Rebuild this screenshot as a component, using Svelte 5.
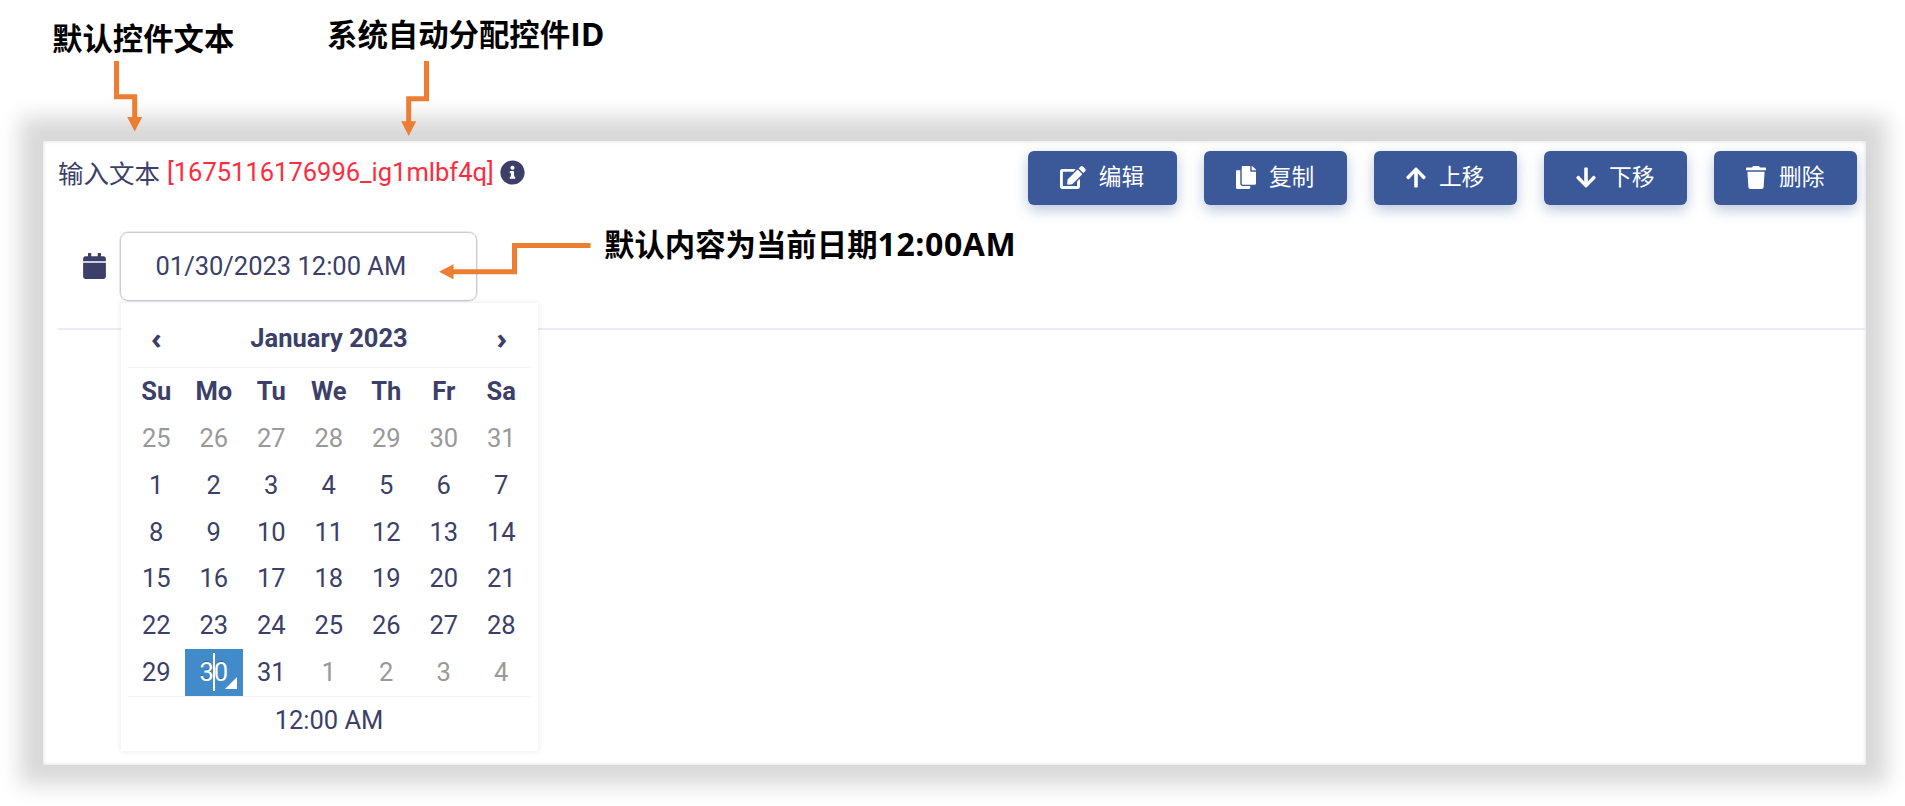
<script>
  const actions = [
    { label: '编辑', icon: 'edit' },
    { label: '复制', icon: 'copy' },
    { label: '上移', icon: 'up' },
    { label: '下移', icon: 'down' },
    { label: '删除', icon: 'trash' }
  ];
  const weekdays = ['Su', 'Mo', 'Tu', 'We', 'Th', 'Fr', 'Sa'];
  const days = Array.from({ length: 42 }, (_, i) => {
    const n = i - 6;
    if (n < 1) return { n: n + 31, muted: true };
    if (n > 31) return { n: n - 31, muted: true };
    return { n, active: n === 30 };
  });
</script>

<main class="page">
  <section class="panel">
    <header class="bar">
      <div class="title">
        <span class="name">输入文本</span>
        <span class="id">[1675116176996_ig1mlbf4q]</span>
        <svg class="info" viewBox="0 0 512 512"><path fill="currentColor" d="M256 8C119 8 8 119 8 256s111 248 248 248 248-111 248-248S393 8 256 8zm0 110c23 0 42 19 42 42s-19 42-42 42-42-19-42-42 19-42 42-42zm56 254c0 7-5 12-12 12h-88c-7 0-12-5-12-12v-24c0-7 5-12 12-12h12v-64h-12c-7 0-12-5-12-12v-24c0-7 5-12 12-12h64c7 0 12 5 12 12v100h12c7 0 12 5 12 12z"/></svg>
      </div>
      <div class="actions">
        {#each actions as a}
          <button class="btn">
            {#if a.icon === 'edit'}
              <svg class="wide" viewBox="0 0 576 512"><path fill="currentColor" d="M402.600 83.200l90.200 90.200c3.800 3.800 3.800 10 0 13.800L274.400 405.600l-92.800 10.300c-12.400 1.400-22.900-9.100-21.500-21.500l10.300-92.800L388.800 83.200c3.800-3.800 10-3.800 13.800 0zm162-22.900l-48.800-48.800c-15.200-15.200-39.900-15.200-55.200 0l-35.400 35.400c-3.800 3.800-3.800 10 0 13.800l90.200 90.200c3.800 3.800 10 3.800 13.800 0l35.400-35.400c15.200-15.300 15.200-40 0-55.200zM384 346.200V448H64V128h229.800c3.200 0 6.200-1.300 8.500-3.500l40-40c7.600-7.600 2.200-20.500-8.500-20.500H48C21.500 64 0 85.500 0 112v352c0 26.500 21.500 48 48 48h352c26.500 0 48-21.500 48-48V306.200c0-10.700-12.900-16-20.500-8.500l-40 40c-2.200 2.300-3.500 5.300-3.500 8.500z"/></svg>
            {:else if a.icon === 'copy'}
              <svg viewBox="0 0 448 512"><path fill="currentColor" d="M320 448v40c0 13.300-10.700 24-24 24H24c-13.300 0-24-10.700-24-24V120c0-13.300 10.700-24 24-24h72v296c0 30.900 25.100 56 56 56h168zm0-344V0H152c-13.300 0-24 10.700-24 24v368c0 13.300 10.700 24 24 24h272c13.300 0 24-10.700 24-24V128H344c-13.200 0-24-10.800-24-24zm121-31L375 7A24 24 0 0 0 358.100 0H352v96h96v-6.100a24 24 0 0 0-7-16.900z"/></svg>
            {:else if a.icon === 'up'}
              <svg viewBox="0 0 448 512"><path fill="currentColor" d="M34.900 289.500l-22.200-22.200c-9.400-9.400-9.400-24.600 0-33.900L207 39c9.400-9.400 24.600-9.400 33.900 0l194.300 194.300c9.400 9.400 9.400 24.600 0 33.900L413 289.400c-9.500 9.500-25 9.300-34.300-.4L264 168.600V456c0 13.300-10.700 24-24 24h-32c-13.300 0-24-10.700-24-24V168.600L69.200 289.100c-9.300 9.800-24.800 10-34.300.4z"/></svg>
            {:else if a.icon === 'down'}
              <svg viewBox="0 0 448 512"><path fill="currentColor" d="M413.100 222.500l22.200 22.200c9.400 9.400 9.400 24.600 0 33.900L241 473c-9.400 9.400-24.600 9.400-33.900 0L12.700 278.600c-9.400-9.400-9.400-24.600 0-33.900l22.200-22.200c9.500-9.500 25-9.300 34.300.4L184 343.400V56c0-13.300 10.700-24 24-24h32c13.300 0 24 10.700 24 24v287.400l114.800-120.500c9.300-9.800 24.800-10 34.300-.4z"/></svg>
            {:else}
              <svg viewBox="0 0 448 512"><path fill="currentColor" d="M432 32H312l-9.400-18.700A24 24 0 0 0 281.100 0H166.800a23.700 23.700 0 0 0-21.400 13.300L136 32H16A16 16 0 0 0 0 48v32a16 16 0 0 0 16 16h416a16 16 0 0 0 16-16V48a16 16 0 0 0-16-16zM32 128l21.200 339a48 48 0 0 0 47.900 45h245.800a48 48 0 0 0 47.900-45L416 128z"/></svg>
            {/if}
            <span>{a.label}</span>
          </button>
        {/each}
      </div>
    </header>

    <div class="field">
      <svg class="cal" viewBox="0 0 448 512"><path fill="currentColor" d="M0 464c0 26.500 21.500 48 48 48h352c26.500 0 48-21.500 48-48V192H0v272zM448 112c0-26.500-21.500-48-48-48h-48V12c0-6.600-5.400-12-12-12h-40c-6.600 0-12 5.400-12 12v52H160V12c0-6.600-5.400-12-12-12h-40c-6.600 0-12 5.400-12 12v52H48C21.500 64 0 85.500 0 112v48h448z"/></svg>
      <div class="input">
        <span class="value">01/30/2023 12:00 AM</span>
        <div class="picker">
          <div class="head">
            <span class="nav">‹</span><span class="month">January 2023</span><span class="nav">›</span>
          </div>
          <div class="grid week">
            {#each weekdays as w}<span>{w}</span>{/each}
          </div>
          <div class="grid">
            {#each days as d}
              <span class:muted={d.muted} class:active={d.active}>{d.n}</span>
            {/each}
          </div>
          <div class="time">12:00 AM</div>
        </div>
      </div>
    </div>
    <div class="rule"></div>
  </section>

  <span class="note n1">默认控件文本</span>
  <span class="note n2">系统自动分配控件<span class="latin">ID</span></span>
  <span class="note n3">默认内容为当前日期<span class="latin wider">12:00AM</span></span>
  <svg class="arrows" viewBox="0 0 1905 806">
    <g fill="none" stroke="#ed7d31" stroke-width="5">
      <path d="M116.500 61V96.700H134.700V118"/>
      <path d="M426.500 61V98.700H408.700V122"/>
      <path d="M590.500 245.400H514.500V271.700H453"/>
    </g>
    <g fill="#ed7d31">
      <path d="M127.200 117H142.200L134.700 131.500Z"/>
      <path d="M401.200 121.300H416.200L408.700 136Z"/>
      <path d="M453.500 264.300V279.300L439 271.700Z"/>
    </g>
  </svg>
</main>

<style>
  :global(body) { background: #fff; }
  .page {
    position: relative;
    box-sizing: border-box;
    width: 1905px;
    height: 806px;
    padding: 141px 39px 41px 43px;
    overflow: hidden;
    font-family: Roboto, 'Noto Sans CJK SC', sans-serif;
    font-size: 25.500px;
    color: #3b3f69;
  }
  .panel {
    height: 624px;
    background: #fff;
    box-shadow: inset 0 0 4px rgba(0, 0, 0, .15), -1px -2px 20px 22px #d9d9d9;
  }
  .bar {
    display: flex;
    justify-content: space-between;
    padding: 10px 9px 0 15px;
    height: 81px;
  }
  .title { display: flex; align-items: center; height: 42px; white-space: nowrap; }
  .name { position: relative; top: -1px; }
  .id { color: #ff2c40; margin-left: 7px; }
  .info { width: 25px; height: 25px; margin-left: 6.500px; }
  .actions { display: flex; gap: 26.700px; align-items: flex-start; }
  .btn {
    display: flex;
    align-items: center;
    gap: 12.800px;
    height: 54px;
    padding: 0 32.600px;
    border: 0;
    border-radius: 6px;
    background: #3b5998;
    color: #fff;
    font: 22.700px Roboto, 'Noto Sans CJK SC', sans-serif;
    box-shadow: 0 5px 14px rgba(59, 89, 152, .35);
  }
  .btn svg { position: relative; top: -1px; width: 20px; height: 23px; }
  .btn svg.wide { width: 25.700px; }
  .btn span { line-height: 1; }
  .field { display: flex; align-items: center; height: 69px; padding-left: 40px; }
  .cal { position: relative; top: -1px; width: 23px; height: 26px; margin-right: 13.500px; }
  .input {
    position: relative;
    box-sizing: border-box;
    width: 357.500px;
    height: 69px;
    border: 1.500px solid #cbcbd8;
    box-shadow: 0 0 0 .5px #d6d6e0;
    border-radius: 8px;
    padding-left: 35px;
  }
  .value { line-height: 66px; }
  .rule { height: 1.500px; margin: 27px 0 0 15px; background: #ebebfa; }
  .picker {
    position: absolute;
    z-index: 2;
    top: 70px;
    left: 0;
    box-sizing: border-box;
    width: 417px;
    height: 448px;
    padding: 7px;
    background: #fff;
    box-shadow: 0 0 5px 1px rgba(0, 0, 0, .07);
  }
  .head { display: flex; height: 57px; border-bottom: 1px solid #f4f4f6; font-weight: 700; line-height: 56px; text-align: center; }
  .nav { width: 57.500px; font-family: 'Open Sans', sans-serif; font-size: 29px; }
  .month { flex: 1; }
  .grid { display: grid; grid-template-columns: repeat(7, 57.500px); grid-auto-rows: 46.850px; line-height: 46.850px; text-align: center; }
  .week { font-weight: 700; }
  .muted { color: #999; }
  .active { position: relative; background: #428bca; color: #fff; text-shadow: 0 -1px 0 rgba(0, 0, 0, .25); }
  .active::before { content: ''; position: absolute; left: 28px; top: 4px; width: 2px; height: 38px; background: #fff; }
  .active::after { content: ''; position: absolute; right: 6px; bottom: 7px; border: 6px solid transparent; border-right-color: #fff; border-bottom-color: #fff; }
  .time { border-top: 1px solid #f4f4f6; line-height: 46px; text-align: center; }
  .note { position: absolute; z-index: 3; color: #000; font: 700 30.400px/40px 'Open Sans', 'Noto Sans CJK SC', sans-serif; white-space: nowrap; }
  .n1 { left: 52px; top: 19px; }
  .n2 { left: 327px; top: 15px; }
  .n3 { left: 604px; top: 225px; }
  .latin { font-size: 32px; line-height: 1; }
  .wider { letter-spacing: .6px; }
  .arrows { position: absolute; z-index: 4; left: 0; top: 0; width: 1905px; height: 806px; pointer-events: none; }
</style>
